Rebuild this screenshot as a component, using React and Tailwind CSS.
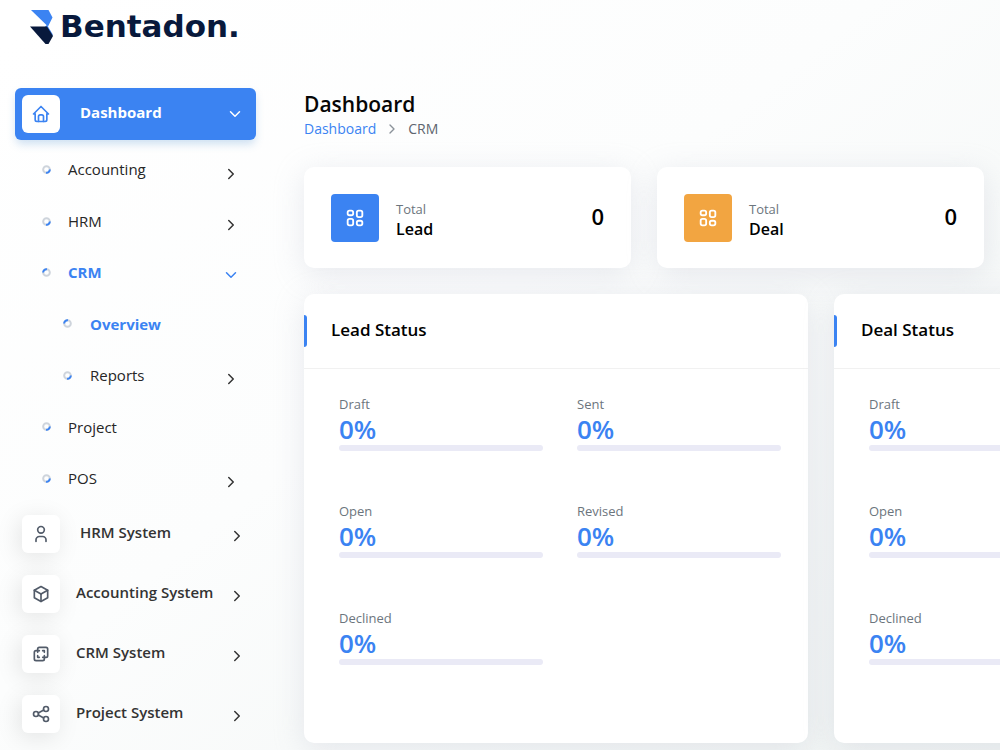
import React from 'react';
import { TbHome, TbUser, TbBox, TbLayersDifference, TbShare, TbLayout2, TbChevronRight, TbChevronDown } from 'react-icons/tb';

const subItems = [
  { label: 'Accounting', arrow: 'right' },
  { label: 'HRM', arrow: 'right' },
  { label: 'CRM', arrow: 'down', active: true },
  { label: 'Overview', nested: true, active: true },
  { label: 'Reports', nested: true, arrow: 'right' },
  { label: 'Project' },
  { label: 'POS', arrow: 'right' },
];

const systems = [
  { label: 'HRM System', icon: TbUser, pad: 'pl-5' },
  { label: 'Accounting System', icon: TbBox, pad: 'pl-4' },
  { label: 'CRM System', icon: TbLayersDifference, pad: 'pl-4' },
  { label: 'Project System', icon: TbShare, pad: 'pl-4' },
];

const leadRows = [['Draft', 'Sent'], ['Open', 'Revised'], ['Declined']];
const dealRows = [['Draft'], ['Open'], ['Declined']];

function Logo() {
  return (
    <a href="#" className="flex h-[52px] items-center gap-1.5 pt-0.5 pl-[30px]">
      <svg width="24" height="34" viewBox="0 0 24 34" aria-hidden="true">
        <path d="M1 0H18.5L22.500 7.500L18 16.500L1 0Z" fill="#3b83f2" />
        <path d="M17 15L22.500 24L23 26L15 16.500Z" fill="#3b83f2" />
        <path d="M0 16.500H17L23 26L18.500 34H15.500L0 16.500Z" fill="#08193c" />
      </svg>
      <span className="pb-0.5 font-['DejaVu_Sans',sans-serif] text-[31px] leading-9 font-bold text-[#08193c]">Bentadon.</span>
    </a>
  );
}

function Dot({ active }) {
  return (
    <svg viewBox="0 0 10 10" className={`size-[9px] shrink-0 ${active ? 'rotate-180' : ''}`} fill="none" strokeWidth="2.2" aria-hidden="true">
      <circle cx="5" cy="5" r="3.700" stroke="#ced4dc" />
      <path d="M8.700 5A3.700 3.700 0 0 1 4.500 8.700" stroke="#3b83f2" />
    </svg>
  );
}

function SubItem({ item }) {
  return (
    <li className="flex flex-1">
      <button className={`flex w-full items-center text-left ${item.nested ? 'pl-[63px]' : 'pl-[42px]'} pr-6`}>
        <Dot active={item.active} />
        <span className={`flex-1 text-[15px] ${item.nested ? 'pl-[18px]' : 'pl-[17px]'} ${item.active ? 'font-bold text-[#3b83f2]' : 'font-medium text-[#262626]'}`}>
          {item.label}
        </span>
        {item.arrow === 'right' && <TbChevronRight className="mt-2 size-[18px] text-[#333]" />}
        {item.arrow === 'down' && <TbChevronDown className="mt-1 size-[18px] text-[#3b83f2]" />}
      </button>
    </li>
  );
}

function Sidebar() {
  return (
    <aside className="w-[264px] shrink-0">
      <Logo />
      <nav className="pt-9">
        <button className="ml-[15px] flex h-[52px] w-[241px] items-center rounded-md bg-[#3b83f2] pr-3 pl-[7px] text-left text-white shadow-[0_5px_9px_-1px_rgba(59,131,202,0.25)]">
          <span className="flex size-[38px] items-center justify-center rounded-md bg-white">
            <TbHome className="size-5 text-[#3b83f2]" />
          </span>
          <span className="flex-1 pb-1 pl-5 text-[15px] font-bold">Dashboard</span>
          <TbChevronDown className="size-[18px]" />
        </button>
        <ul className="mt-1 flex h-[360px] flex-col">
          {subItems.map((item) => (
            <SubItem key={item.label} item={item} />
          ))}
        </ul>
        <ul className="mt-1 flex flex-col gap-2">
          {systems.map(({ label, icon: Icon, pad }) => (
            <li key={label}>
              <button className="flex h-[52px] w-full items-center pr-[18px] pl-[22px] text-left">
                <span className="flex size-[38px] items-center justify-center rounded-md bg-white shadow-[-3px_4px_23px_rgba(0,0,0,0.1)]">
                  <Icon className="size-5 text-[#525b69]" />
                </span>
                <span className={`flex-1 pb-1 text-[15px] font-semibold text-[#333] ${pad}`}>{label}</span>
                <TbChevronRight className="mt-1 size-[18px] text-[#333]" />
              </button>
            </li>
          ))}
        </ul>
      </nav>
    </aside>
  );
}

function StatCard({ label, value, color }) {
  return (
    <div className="flex h-[101px] items-center rounded-[10px] bg-white px-[27px] shadow-[0_6px_30px_rgba(182,186,203,0.3)]">
      <div className={`flex size-12 items-center justify-center rounded text-white ${color}`}>
        <TbLayout2 className="size-[22px]" />
      </div>
      <div className="flex-1 pt-0.5 pl-[17px]">
        <div className="text-[13px] leading-5 text-[#6c757d]">Total</div>
        <div className="text-base leading-5 font-semibold text-black">{label}</div>
      </div>
      <div className="pb-0.5 text-[22px] font-semibold text-black">{value}</div>
    </div>
  );
}

function StatusCard({ title, rows }) {
  return (
    <section className="rounded-[10px] bg-white shadow-[0_6px_30px_rgba(182,186,203,0.3)]">
      <header className="flex h-[75px] items-center border-b border-[#f1f1f1]">
        <span className="h-8 w-[3px] rounded-r-sm bg-[#3b83f2]" />
        <h2 className="pb-0.5 pl-6 text-[17px] font-semibold text-black">{title}</h2>
      </header>
      <div className="flex flex-col gap-[50px] pt-[25px] pr-[27px] pb-[78px] pl-[35px]">
        {rows.map((row) => (
          <div key={row[0]} className="grid grid-cols-2 gap-x-[34px]">
            {row.map((status) => (
              <div key={status}>
                <div className="w-fit text-[13px] leading-5 text-[#6c757d]">{status}</div>
                <div className="mb-px w-fit text-[26px] leading-[30px] font-semibold text-[#3b83f2]">0%</div>
                <div className="h-1.5 rounded-full bg-[#eaeaf6]" />
              </div>
            ))}
          </div>
        ))}
      </div>
    </section>
  );
}

export default function App() {
  return (
    <div className="flex min-h-screen overflow-x-clip bg-[linear-gradient(141.55deg,#ffffff_3%,#fcfdfd_45%,#f0f4f3_100%)] font-['Open_Sans','Noto_Sans',sans-serif]">
      <Sidebar />
      <main className="min-w-0 flex-1 pt-[90px] pr-4 pb-[7px] pl-10">
        <h1 className="text-[21px] leading-7 font-semibold text-[#060606]">Dashboard</h1>
        <nav aria-label="Breadcrumb" className="flex h-[22px] items-center text-sm">
          <a href="#" className="text-[#3b83f2]">Dashboard</a>
          <TbChevronRight className="mx-2 size-4 text-[#8b929a]" />
          <span className="text-[#60656f]">CRM</span>
        </nav>
        <div className="mt-[27px] grid grid-cols-2 gap-[26px]">
          <StatCard label="Lead" value="0" color="bg-[#3b83f2]" />
          <StatCard label="Deal" value="0" color="bg-[#f2a541]" />
        </div>
        <div className="mt-[26px] grid grid-cols-[repeat(2,minmax(504px,1fr))] gap-[26px]">
          <StatusCard title="Lead Status" rows={leadRows} />
          <StatusCard title="Deal Status" rows={dealRows} />
        </div>
      </main>
    </div>
  );
}
